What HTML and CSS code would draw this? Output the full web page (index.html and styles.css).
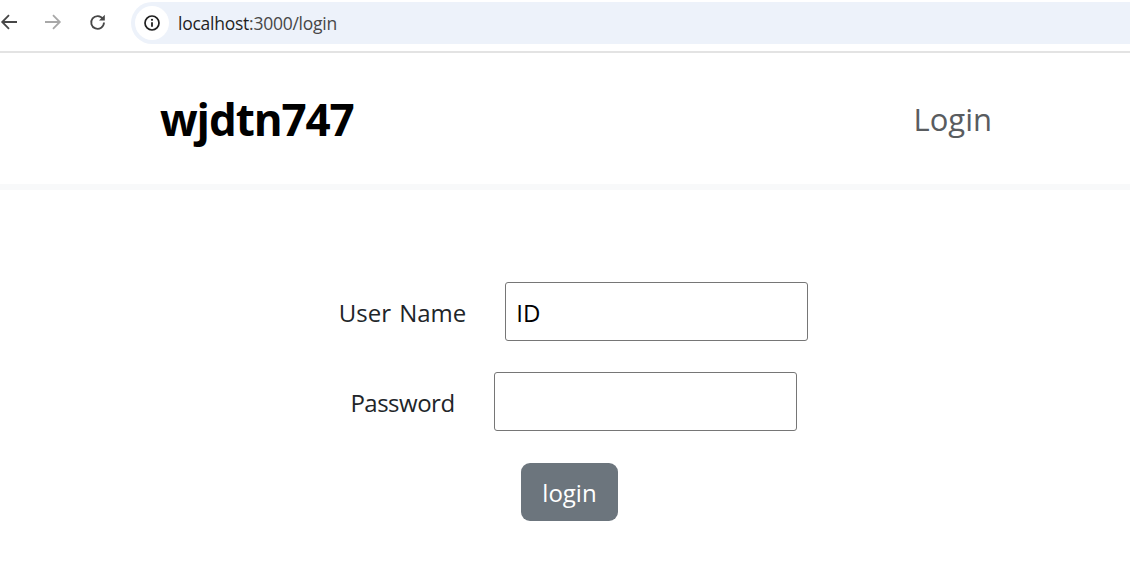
FILE: index.html
```html
<!DOCTYPE html>
<html lang="en">
<head>
<meta charset="utf-8">
<title>Login</title>
<link rel="stylesheet" href="styles.css">
</head>
<body>
<div class="chrome">
  <svg class="tool" width="18" height="18" viewBox="0 0 18 18"><path d="M17 9H2M9 2.2 2.2 9 9 15.8" fill="none" stroke="#474747" stroke-width="1.8"/></svg>
  <svg class="tool" width="18" height="18" viewBox="0 0 18 18"><path d="M1 9H16M9 2.2 15.8 9 9 15.8" fill="none" stroke="#a8a8a8" stroke-width="1.8"/></svg>
  <svg class="tool" width="18" height="18" viewBox="0 0 18 18"><path d="M15 6A6.4 6.4 0 1 0 16 9.6" fill="none" stroke="#474747" stroke-width="1.8"/><path d="M16.8 1.8v5.8H11z" fill="#474747"/></svg>
  <div class="omnibox">
    <span class="badge"><svg width="18" height="18" viewBox="0 0 18 18"><circle cx="9" cy="9" r="7" fill="none" stroke="#1f1f1f" stroke-width="1.7"/><path d="M9 8.2v4.6" stroke="#1f1f1f" stroke-width="1.8"/><circle cx="9" cy="5.8" r="1.1" fill="#1f1f1f"/></svg></span>
    <span class="url"><span class="host">localhost</span>:3000/login</span>
  </div>
</div>
<nav class="navbar">
  <span class="brand">wjdtn747</span>
  <a class="nav-link" href="#">Login</a>
</nav>
<main class="form">
  <div class="row">
    <label class="label label-user">User Name</label>
    <input class="field" type="text" value="ID">
  </div>
  <div class="row">
    <label class="label">Password</label>
    <input class="field" type="password">
  </div>
  <button class="submit" type="button">login</button>
</main>
</body>
</html>
```
FILE: styles.css
```css
* { box-sizing: border-box; }
html, body { margin: 0; height: 100%; overflow: hidden; background: #fff; }
body { font-family: "Open Sans", "Noto Sans", sans-serif; color: #212529; }

.chrome {
  height: 53px;
  display: flex;
  align-items: center;
  padding: 0 0 7px 0;
  border-bottom: 2px solid #e3e3e3;
  margin-left: -1px;
}
.tool { flex: none; margin-right: 26px; }
.tool:first-child { margin-left: 1px; }
.tool:nth-child(3) { margin-right: 25px; }
.omnibox {
  flex: 1;
  height: 42px;
  margin-top: 2px;
  background: #edf2fa;
  border-radius: 21px 0 0 21px;
  display: flex;
  align-items: center;
  padding-left: 4px;
  gap: 9px;
}
.badge {
  width: 34px;
  height: 34px;
  border-radius: 50%;
  background: #fff;
  display: flex;
  align-items: center;
  justify-content: center;
}
.url { font-size: 17.5px; letter-spacing: -0.25px; color: #474747; }
.host { color: #1f1f1f; }

.navbar {
  height: 137px;
  padding: 0 138px 0 160px;
  display: flex;
  align-items: center;
  justify-content: space-between;
  border-bottom: 6px solid #f8f9fa;
}
.brand { font-size: 44px; font-weight: 700; letter-spacing: -1.1px; color: #000; }
.nav-link { font-size: 31px; color: #595c5f; text-decoration: none; }

.form {
  padding-top: 92px;
  display: flex;
  flex-direction: column;
  align-items: center;
  gap: 31px;
}
.row {
  display: flex;
  align-items: center;
  gap: 39px;
  margin-left: 17px;
  font-size: 24px;
}
.label { font-size: 24px; letter-spacing: -0.5px; color: #212529; padding-top: 2px; }
.label-user { letter-spacing: 0; word-spacing: 2px; }
.field {
  width: 303px;
  height: 59px;
  padding: 2px 10px 0;
  border: 1px solid #767676;
  border-radius: 3px;
  font: inherit;
  color: #000;
  background: #fff;
}
.submit {
  width: 97px;
  height: 58px;
  margin-top: 1px;
  margin-left: 9px;
  padding-top: 2px;
  border: 0;
  border-radius: 9px;
  background: #6c757d;
  color: #fff;
  font: inherit;
  font-size: 24px;
}
```
